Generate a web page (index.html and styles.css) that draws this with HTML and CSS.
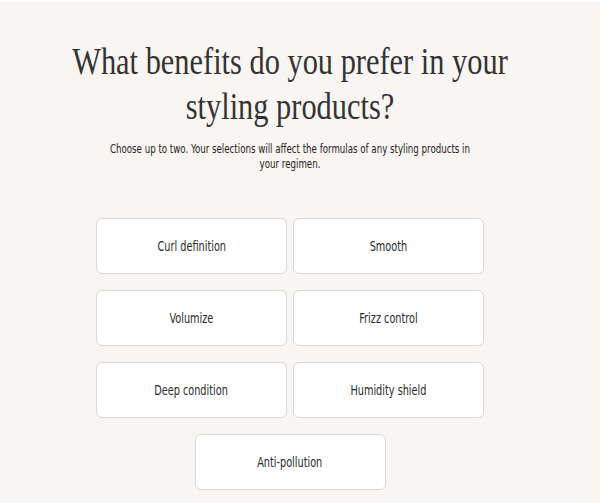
FILE: index.html
```html
<!DOCTYPE html>
<html lang="en">
<head>
  <meta charset="UTF-8">
  <meta name="viewport" content="width=device-width, initial-scale=1.0">
  <title>Styling benefits</title>
  <link rel="stylesheet" href="styles.css">
</head>
<body>
  <div class="page">
    <div class="quiz">
      <h1 class="question">What benefits do you prefer in your styling products?</h1>
      <p class="hint">Choose up to two. Your selections will affect the formulas of any styling products in your regimen.</p>

      <!-- answers -->
      <div class="options">
        <button class="option"><span>Curl definition</span></button>
        <button class="option"><span>Smooth</span></button>
        <button class="option"><span>Volumize</span></button>
        <button class="option"><span>Frizz control</span></button>
        <button class="option"><span>Deep condition</span></button>
        <button class="option"><span>Humidity shield</span></button>
        <button class="option option-last"><span>Anti-pollution</span></button>
      </div>
    </div>
  </div>
</body>
</html>
```

FILE: styles.css
```css
body {
  margin: 0;
  padding: 0;
  background-color: #ffffff;
  color: #222;
}
.page {
  margin: 2px 2px 0 0;
  height: 501px;
  background-color: #f9f5f2;
  overflow: hidden;
}
.quiz {
  width: 580px;
  padding-top: 37px;
  text-align: center;
}
/* the original faces are condensed, so squeeze the local ones */
.question {
  margin: 0 auto;
  width: 580px;
  font-family: "Liberation Serif", serif;
  font-weight: normal;
  font-size: 38px;
  line-height: 45px;
  color: #333;
  transform: scaleX(0.8);
}
.hint {
  margin: 12px auto 0;
  width: 500px;
  font-family: "DejaVu Sans Condensed", "DejaVu Sans", sans-serif;
  font-size: 13px;
  line-height: 15px;
  color: #222;
  transform: scaleX(0.74);
}
.options {
  display: grid;
  grid-template-columns: 191px 191px;
  justify-content: center;
  gap: 16px 6px;
  margin-top: 47px;
}
.option {
  height: 56px;
  padding: 0;
  background: #fff;
  border: 1px solid #dcd8d5;
  border-radius: 6px;
  font-family: "DejaVu Sans Condensed", "DejaVu Sans", sans-serif;
  font-size: 13.5px;
  color: #2b2b2b;
  cursor: pointer;
}
.option span {
  display: inline-block;
  transform: scaleX(0.8);
}
.option-last {
  grid-column: 1 / 3;
  justify-self: center;
  width: 191px;
}
```
